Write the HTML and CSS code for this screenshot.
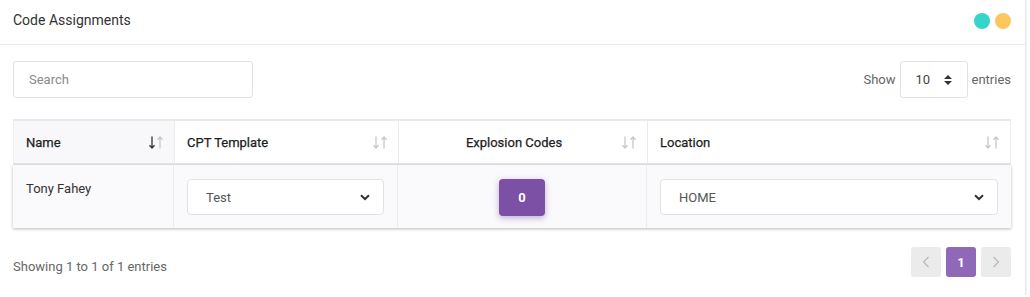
FILE: index.html
```html
<!DOCTYPE html>
<html>
<head>
<meta charset="utf-8">
<link rel="stylesheet" href="styles.css">
</head>
<body>
<div class="card">
  <div class="card-header">
    <div class="title">Code Assignments</div>
    <div class="dots"><span class="dot teal"></span><span class="dot yellow"></span></div>
  </div>
  <div class="toolbar">
    <div class="search">Search</div>
    <div class="length">
      <span>Show</span>
      <div class="len-select"><span>10</span>
        <svg width="8" height="12" viewBox="0 0 8 12"><path d="M0 5 L4 1 L8 5 Z M0 7 L4 11 L8 7 Z" fill="#333"/></svg>
      </div>
      <span>entries</span>
    </div>
  </div>
  <div class="table">
    <div class="row head">
      <div class="cell sorted"><span>Name</span>
        <svg class="sort" width="16" height="13" viewBox="0 0 16 13"><g fill="none" stroke-width="1.3"><path d="M3 0.5 V12 M0.5 9.2 L3 12 L5.5 9.2" stroke="#333"/><path d="M11 1 V12.5 M8.5 3.8 L11 1 L13.5 3.8" stroke="#c8c8c8"/></g></svg>
      </div>
      <div class="cell"><span>CPT Template</span>
        <svg class="sort" width="16" height="13" viewBox="0 0 16 13"><g fill="none" stroke-width="1.3" stroke="#c8c8c8"><path d="M3 0.5 V12 M0.5 9.2 L3 12 L5.5 9.2"/><path d="M11 1 V12.5 M8.5 3.8 L11 1 L13.5 3.8"/></g></svg>
      </div>
      <div class="cell center"><span>Explosion Codes</span>
        <svg class="sort" width="16" height="13" viewBox="0 0 16 13"><g fill="none" stroke-width="1.3" stroke="#c8c8c8"><path d="M3 0.5 V12 M0.5 9.2 L3 12 L5.5 9.2"/><path d="M11 1 V12.5 M8.5 3.8 L11 1 L13.5 3.8"/></g></svg>
      </div>
      <div class="cell"><span>Location</span>
        <svg class="sort" width="16" height="13" viewBox="0 0 16 13"><g fill="none" stroke-width="1.3" stroke="#c8c8c8"><path d="M3 0.5 V12 M0.5 9.2 L3 12 L5.5 9.2"/><path d="M11 1 V12.5 M8.5 3.8 L11 1 L13.5 3.8"/></g></svg>
      </div>
    </div>
    <div class="row body">
      <div class="cell name">Tony Fahey</div>
      <div class="cell"><div class="select"><span>Test</span>
        <svg width="10" height="7" viewBox="0 0 10 7"><path d="M1 1.2 L5 5 L9 1.2" fill="none" stroke="#333" stroke-width="2"/></svg></div></div>
      <div class="cell center"><div class="btn">0</div></div>
      <div class="cell"><div class="select"><span>HOME</span>
        <svg width="10" height="7" viewBox="0 0 10 7"><path d="M1 1.2 L5 5 L9 1.2" fill="none" stroke="#333" stroke-width="2"/></svg></div></div>
    </div>
  </div>
  <div class="footer">
    <div class="info">Showing 1 to 1 of 1 entries</div>
    <div class="pager">
      <div class="page disabled"><svg width="8" height="12" viewBox="0 0 8 12"><path d="M6.5 1 L1.5 6 L6.5 11" fill="none" stroke="#b8b8b8" stroke-width="1.2"/></svg></div>
      <div class="page active">1</div>
      <div class="page disabled"><svg width="8" height="12" viewBox="0 0 8 12"><path d="M1.5 1 L6.5 6 L1.5 11" fill="none" stroke="#b8b8b8" stroke-width="1.2"/></svg></div>
    </div>
  </div>
</div>
</body>
</html>
```

FILE: styles.css
```css
* { box-sizing: border-box; }
body {
  margin: 0;
  background: #fff;
  font-family: Roboto, "Liberation Sans", Arial, sans-serif;
  color: #333;
}
.card {
  width: 1026px;
  height: 295px;
  background: #fff;
  border-right: 1px solid #e6e6e6;
  box-shadow: 0 1px 2px rgba(0,0,0,0.12);
}
.card-header {
  height: 45px;
  border-bottom: 1px solid #ebebeb;
  display: flex;
  align-items: center;
  justify-content: space-between;
  padding: 0 14px 4px 13px;
}
.title { font-size: 14px; color: #333; }
.dots { display: flex; gap: 5px; padding-top: 2px; }
.dot { width: 16px; height: 16px; border-radius: 50%; display: block; }
.teal { background: #35d6c9; }
.yellow { background: #fec75e; }
.toolbar {
  display: flex;
  justify-content: space-between;
  align-items: center;
  margin: 16px 14px 0 13px;
}
.search {
  width: 240px;
  height: 37px;
  border: 1px solid #e2e2e2;
  border-radius: 3px;
  font-size: 13px;
  color: #8a8a8a;
  padding-left: 15px;
  display: flex;
  align-items: center;
}
.length {
  display: flex;
  align-items: center;
  gap: 4px;
  font-size: 13px;
  color: #666;
}
.len-select {
  width: 68px;
  height: 37px;
  border: 1px solid #e2e2e2;
  border-radius: 3px;
  display: flex;
  align-items: center;
  justify-content: space-between;
  padding: 0 15px 0 15px;
  color: #444;
  font-size: 13px;
}
.table {
  margin: 21px 14px 0 13px;
  border-top: 2px solid #eaeaea;
}
.row {
  display: grid;
  grid-template-columns: 161px 224px 249px 1fr;
}
.head { height: 44px; border-bottom: 2px solid #e6e6e6; border-left: 1px solid #eee; }
.head .cell {
  display: flex;
  align-items: center;
  justify-content: space-between;
  padding: 1px 9px 0 12px;
  font-size: 13px;
  font-weight: 400;
  color: #1e1e1e;
  -webkit-text-stroke: 0.25px #1e1e1e;
  border-right: 1px solid #ebebeb;
}
.head .cell.sorted { background: #f8f8fa; }
.head .cell.center { justify-content: center; position: relative; padding-right: 30px; }
.head .cell.center .sort { position: absolute; right: 9px; top: 15px; }
.head .cell:last-child { border-right: 1px solid #eee; }
.body {
  height: 63px;
  background: #faf9fc;
  box-shadow: 0 1px 3px rgba(0,0,0,0.28);
}
.body .cell {
  padding: 14px 13px 0 13px;
  border-right: 1px solid #ececec;
  font-size: 13px;
}
.body .cell:last-child { border-right: none; }
.body .cell.name { padding-top: 16px; color: #333; }
.body .cell.center { display: flex; justify-content: center; padding-top: 14px; }
.select {
  height: 36px;
  border: 1px solid #e2e2e2;
  border-radius: 4px;
  background: #fff;
  display: flex;
  align-items: center;
  justify-content: space-between;
  padding: 0 13px 0 18px;
  font-size: 13px;
  color: #555;
}
.btn {
  width: 46px;
  height: 37px;
  background: #7c50a4;
  border-radius: 4px;
  color: #fff;
  font-weight: 700;
  font-size: 13px;
  display: flex;
  align-items: center;
  justify-content: center;
  box-shadow: 0 2px 6px rgba(124,80,164,0.45);
}
.footer {
  display: flex;
  justify-content: space-between;
  align-items: center;
  margin: 19px 14px 0 13px;
}
.info { font-size: 13px; color: #666; padding-top: 8px; }
.pager { display: flex; gap: 5px; }
.page {
  width: 30px;
  height: 30px;
  border-radius: 3px;
  display: flex;
  align-items: center;
  justify-content: center;
  font-size: 13px;
}
.page.disabled { background: #ebebeb; }
.page.active { background: #8f68b8; color: #fff; font-weight: 700; }
```
